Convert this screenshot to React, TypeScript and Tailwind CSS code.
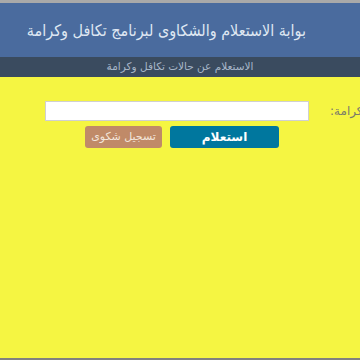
export default function App() {
  return (
    <div
      className="flex h-[360px] w-[360px] flex-col overflow-hidden bg-[#f5f542]"
      style={{ fontFamily: '"DejaVu Sans", sans-serif' }}
    >
      <div className="h-[3px] bg-[#a9a9a9]" />
      <header
        dir="rtl"
        className="flex h-[54px] items-center whitespace-nowrap bg-[#4a6b9e] pr-[54px] pt-[2px] font-['DejaVu_Sans_Condensed','DejaVu_Sans',sans-serif] text-[16px] text-[#dfe7f2]"
      >
        بوابة الاستعلام والشكاوى لبرنامج تكافل وكرامة
      </header>
      <div
        dir="rtl"
        className="flex h-[20px] items-center justify-center bg-[#3a4b5f] text-[10.5px] text-[#a7b6c8]"
      >
        الاستعلام عن حالات تكافل وكرامة
      </div>
      <main className="flex flex-1 flex-col pt-[24px]">
        <div className="flex items-center">
          <input
            type="text"
            className="ml-[45px] h-[20px] w-[264px] shrink-0 border border-[#d0d0d0] bg-white outline-none"
          />
          <label
            dir="rtl"
            className="ml-[21px] shrink-0 whitespace-nowrap text-[12px] text-[#7a7a6a]"
          >
            رقم بطاقة كرامة:
          </label>
        </div>
        <div className="mt-[5px] flex gap-[8px] pl-[85px]">
          <button className="h-[22px] w-[77px] rounded-[3px] bg-[#c08a68] text-[11px] text-[#f3e6dc]">
            تسجيل شكوى
          </button>
          <button className="h-[22px] w-[109px] rounded-[3px] bg-[#00779e] text-[12px] font-bold text-white">
            استعلام
          </button>
        </div>
      </main>
      <div className="h-[2px] bg-[#808080]" />
    </div>
  );
}
